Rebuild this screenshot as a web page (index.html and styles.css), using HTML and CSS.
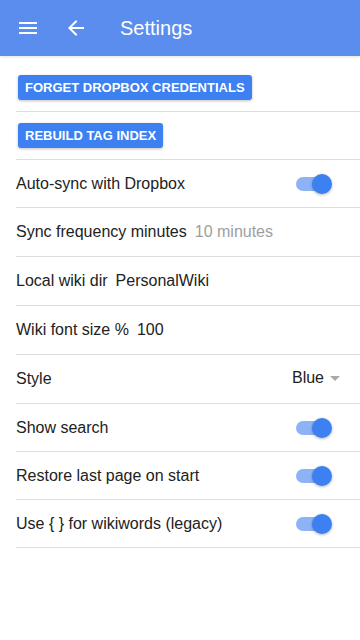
FILE: index.html
```html
<!DOCTYPE html>
<html>
<head>
<meta charset="utf-8">
<link rel="stylesheet" href="styles.css">
</head>
<body>
<header class="toolbar">
  <svg class="icon" viewBox="0 0 24 24" width="24" height="24"><path fill="#fff" d="M3 18h18v-2H3v2zm0-5h18v-2H3v2zm0-7v2h18V6H3z"/></svg>
  <svg class="icon back" viewBox="0 0 24 24" width="24" height="24"><path fill="#fff" d="M20 11H7.83l5.59-5.59L12 4l-8 8 8 8 1.41-1.41L7.83 13H20v-2z"/></svg>
  <div class="title">Settings</div>
</header>
<main class="list">
  <div class="row btn-row"><button class="btn">Forget Dropbox credentials</button></div>
  <div class="row btn-row"><button class="btn">Rebuild tag index</button></div>
  <div class="row"><span class="label">Auto-sync with Dropbox</span><span class="toggle"><span class="track"></span><span class="knob"></span></span></div>
  <div class="row tall"><span class="label">Sync frequency minutes</span><span class="value muted">10 minutes</span></div>
  <div class="row tall"><span class="label">Local wiki dir</span><span class="value">PersonalWiki</span></div>
  <div class="row tall"><span class="label">Wiki font size %</span><span class="value">100</span></div>
  <div class="row tall"><span class="label">Style</span><span class="select">Blue<span class="caret"></span></span></div>
  <div class="row"><span class="label">Show search</span><span class="toggle"><span class="track"></span><span class="knob"></span></span></div>
  <div class="row"><span class="label">Restore last page on start</span><span class="toggle"><span class="track"></span><span class="knob"></span></span></div>
  <div class="row"><span class="label">Use { } for wikiwords (legacy)</span><span class="toggle"><span class="track"></span><span class="knob"></span></span></div>
</main>
</body>
</html>
```
FILE: styles.css
```css
html, body {
  margin: 0;
  padding: 0;
  background: #fff;
  font-family: "Liberation Sans", Arial, sans-serif;
  color: #222;
}
.toolbar {
  height: 56px;
  background: #5b8def;
  display: flex;
  align-items: center;
  padding-left: 16px;
  box-shadow: 0 1px 3px rgba(0,0,0,0.12);
}
.icon { display: block; }
.back { margin-left: 24px; }
.title {
  margin-left: 32px;
  color: #fff;
  font-size: 20px;
}
.list {
  padding-top: 8px;
  padding-left: 16px;
}
.row {
  height: 47px;
  border-bottom: 1px solid #ddd;
  display: flex;
  align-items: center;
  font-size: 16px;
}
.row.tall { height: 48px; }
.btn-row { padding-left: 2px; }
.btn {
  font-family: "Liberation Sans", Arial, sans-serif;
  font-weight: bold;
  font-size: 13px;
  text-transform: uppercase;
  color: #fff;
  background: #3d80f1;
  border: none;
  border-radius: 3px;
  height: 25px;
  padding: 0 7px;
  box-shadow: 0 1px 3px rgba(0,0,0,0.25);
}
.label { white-space: nowrap; }
.value { margin-left: 8px; }
.muted { color: #9e9e9e; }
.toggle {
  margin-left: auto;
  margin-right: 28px;
  position: relative;
  width: 36px;
  height: 20px;
}
.track {
  position: absolute;
  left: 0;
  top: 3px;
  width: 32px;
  height: 14px;
  border-radius: 7px;
  background: #8db3f6;
}
.knob {
  position: absolute;
  right: 0;
  top: 0;
  width: 20px;
  height: 20px;
  border-radius: 50%;
  background: #3d80f1;
  box-shadow: 0 1px 3px rgba(0,0,0,0.3);
}
.select {
  margin-left: auto;
  margin-right: 20px;
  display: flex;
  align-items: center;
  margin-top: -2px;
}
.caret {
  margin-left: 6px;
  width: 0;
  height: 0;
  border-left: 5px solid transparent;
  border-right: 5px solid transparent;
  border-top: 5px solid #aaa;
}
```
